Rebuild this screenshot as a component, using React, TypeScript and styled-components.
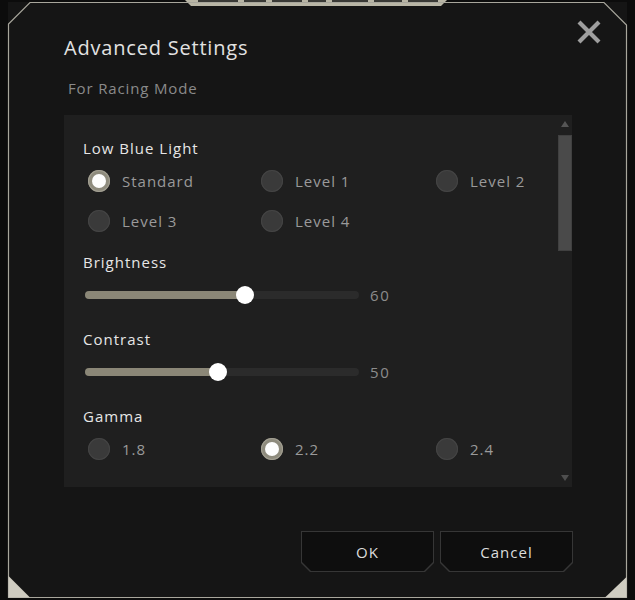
import React from "react";
import styled, { createGlobalStyle } from "styled-components";

const Global = createGlobalStyle`
  html, body { margin: 0; padding: 0; background: #0c0c0c; }
  body { font-family: "Open Sans", "Liberation Sans", sans-serif; }
  * { box-sizing: border-box; }
`;

const Page = styled.div`
  width: 635px;
  height: 600px;
  padding: 2px 0 0 8px;
  overflow: hidden;
`;

const Dialog = styled.div`
  position: relative;
  width: 619px;
  height: 596px;
  background: #151515;
  padding: 0 55px 0 56px;
  display: flex;
  flex-direction: column;
`;

const FrameArt = styled.svg`
  position: absolute;
  left: 0;
  top: 0;
  overflow: visible;
  pointer-events: none;
`;

const Header = styled.div`
  display: flex;
  justify-content: space-between;
  align-items: flex-start;
  padding-top: 18px;
  margin-right: -30px;
`;

const Title = styled.h1`
  margin: 16px 0 0;
  font-size: 20px;
  line-height: 24px;
  font-weight: 400;
  letter-spacing: 0.8px;
  color: #e2e2e2;
`;

const Close = styled.button`
  width: 26px;
  height: 24px;
  padding: 0;
  border: 0;
  background: none;
  display: block;
`;

const Subtitle = styled.div`
  margin-top: 18px;
  padding-left: 4px;
  font-size: 15px;
  line-height: 20px;
  letter-spacing: 0.85px;
  color: #8a8a8a;
`;

const Panel = styled.div`
  margin-top: 17px;
  height: 372px;
  background: #1f1f1f;
  display: flex;
`;

const Content = styled.div`
  flex: 1;
  padding: 23px 0 0 19px;
  display: flex;
  flex-direction: column;
`;

const Section = styled.div<{ $gap?: number }>`
  display: flex;
  flex-direction: column;
  margin-top: ${(p) => p.$gap ?? 0}px;
`;

const Label = styled.div`
  font-size: 15px;
  line-height: 20px;
  letter-spacing: 1px;
  color: #e6e6e6;
`;

const RadioGrid = styled.div`
  display: grid;
  grid-template-columns: 173px 175px auto;
  row-gap: 18px;
  padding-left: 5px;
  margin-top: 12px;
`;

const RadioItem = styled.div`
  display: flex;
  align-items: center;
  gap: 12px;
  height: 22px;
`;

const RadioDot = styled.span<{ $on?: boolean }>`
  width: 22px;
  height: 22px;
  border-radius: 50%;
  flex: none;
  display: flex;
  align-items: center;
  justify-content: center;
  background: ${(p) => (p.$on ? "#8e8b7d" : "#3a3a3a")};
  box-shadow: inset 0 0 0 1px ${(p) => (p.$on ? "#a29f92" : "#444")};
  &::after {
    content: "";
    width: 14px;
    height: 14px;
    border-radius: 50%;
    background: ${(p) => (p.$on ? "#fdfdfd" : "transparent")};
  }
`;

const RadioText = styled.span`
  font-size: 15px;
  line-height: 20px;
  letter-spacing: 1px;
  color: #9a9a9a;
`;

const SliderRow = styled.div`
  display: flex;
  align-items: center;
  height: 20px;
  margin-top: 13px;
  padding-left: 2px;
`;

const Track = styled.div`
  position: relative;
  width: 274px;
  height: 8px;
  border-radius: 4px;
  background: #2b2b2b;
`;

const Fill = styled.div`
  position: absolute;
  left: 0;
  top: 0;
  bottom: 0;
  border-radius: 4px;
  background: #8b8777;
`;

const Thumb = styled.div`
  position: absolute;
  top: 50%;
  width: 18px;
  height: 18px;
  margin: -9px 0 0 -9px;
  border-radius: 50%;
  background: #ffffff;
`;

const Value = styled.span`
  margin-left: 11px;
  font-size: 15px;
  letter-spacing: 1.6px;
  color: #8c8c8c;
`;

const Scrollbar = styled.div`
  width: 15px;
  display: flex;
  flex-direction: column;
  align-items: center;
  padding: 6px 0 6px;
`;

const Arrow = styled.span<{ $down?: boolean }>`
  width: 0;
  height: 0;
  border-left: 4px solid transparent;
  border-right: 4px solid transparent;
  ${(p) =>
    p.$down
      ? "border-top: 6px solid #4e4e4e; margin-top: auto;"
      : "border-bottom: 6px solid #555;"}
`;

const ScrollThumb = styled.div`
  width: 14px;
  height: 116px;
  margin-top: 8px;
  background: #4a4a4a;
  box-shadow: inset 0 0 0 1px #404040;
`;

const Footer = styled.div`
  display: flex;
  justify-content: flex-end;
  gap: 6px;
  margin-top: 44px;
  margin-right: -1px;
`;

const cut = "polygon(0 0, 100% 0, 100% calc(100% - 9px), calc(100% - 9px) 100%, 9px 100%, 0 calc(100% - 9px))";

const Button = styled.button`
  width: 133px;
  height: 41px;
  padding: 1px;
  border: 0;
  background: #363636;
  clip-path: ${cut};
  cursor: pointer;
`;

const ButtonFace = styled.span`
  display: flex;
  align-items: center;
  justify-content: center;
  width: 100%;
  height: 100%;
  background: #0e0e0e;
  clip-path: ${cut};
  font-family: "Open Sans", "Liberation Sans", sans-serif;
  font-size: 15px;
  letter-spacing: 1px;
  color: #dcdcdc;
`;

type Opt = { label: string; on?: boolean };

const RadioGroup = ({ options }: { options: Opt[] }) => (
  <RadioGrid>
    {options.map((o) => (
      <RadioItem key={o.label}>
        <RadioDot $on={o.on} />
        <RadioText>{o.label}</RadioText>
      </RadioItem>
    ))}
  </RadioGrid>
);

const Slider = ({ value }: { value: number }) => {
  const pos = (value / 100) * 274 - 4.5;
  return (
    <SliderRow>
      <Track>
        <Fill style={{ width: pos }} />
        <Thumb style={{ left: pos }} />
      </Track>
      <Value>{value}</Value>
    </SliderRow>
  );
};

export default function App() {
  return (
    <>
      <Global />
      <Page>
        <Dialog>
          <FrameArt width="619" height="596" viewBox="0 0 619 596">
            <polygon points="177,-2 439,-2 433,4 183,4" fill="#b9b6a6" />
            <g fill="#3a3a36">
              <rect x="190" y="-2" width="40" height="2" />
              <rect x="236" y="-2" width="22" height="2" />
              <rect x="264" y="-2" width="30" height="2" />
              <rect x="300" y="-2" width="18" height="2" />
              <rect x="324" y="-2" width="36" height="2" />
              <rect x="366" y="-2" width="28" height="2" />
              <rect x="400" y="-2" width="30" height="2" />
            </g>
            <path
              d="M22 0.5 H596 L618.5 23 V595.5 H0.5 V22 Z"
              fill="none"
              stroke="#a8a69c"
              strokeWidth="1.2"
            />
            <polygon points="0.5,574 0.5,595.5 22,595.5" fill="#cfccc1" />
            <polygon points="618.5,575 618.5,595.5 597,595.5" fill="#cfccc1" />
          </FrameArt>
          <Header>
            <Title>Advanced Settings</Title>
            <Close aria-label="Close">
              <svg width="26" height="24" viewBox="0 0 26 24">
                <path d="M3 2 L23 22 M23 2 L3 22" stroke="#9e9e9e" strokeWidth="4.2" />
              </svg>
            </Close>
          </Header>
          <Subtitle>For Racing Mode</Subtitle>
          <Panel>
            <Content>
              <Section>
                <Label>Low Blue Light</Label>
                <RadioGroup
                  options={[
                    { label: "Standard", on: true },
                    { label: "Level 1" },
                    { label: "Level 2" },
                    { label: "Level 3" },
                    { label: "Level 4" },
                  ]}
                />
              </Section>
              <Section $gap={20}>
                <Label>Brightness</Label>
                <Slider value={60} />
              </Section>
              <Section $gap={24}>
                <Label>Contrast</Label>
                <Slider value={50} />
              </Section>
              <Section $gap={24}>
                <Label>Gamma</Label>
                <RadioGroup
                  options={[{ label: "1.8" }, { label: "2.2", on: true }, { label: "2.4" }]}
                />
              </Section>
            </Content>
            <Scrollbar>
              <Arrow />
              <ScrollThumb />
              <Arrow $down />
            </Scrollbar>
          </Panel>
          <Footer>
            <Button>
              <ButtonFace>OK</ButtonFace>
            </Button>
            <Button>
              <ButtonFace>Cancel</ButtonFace>
            </Button>
          </Footer>
        </Dialog>
      </Page>
    </>
  );
}
